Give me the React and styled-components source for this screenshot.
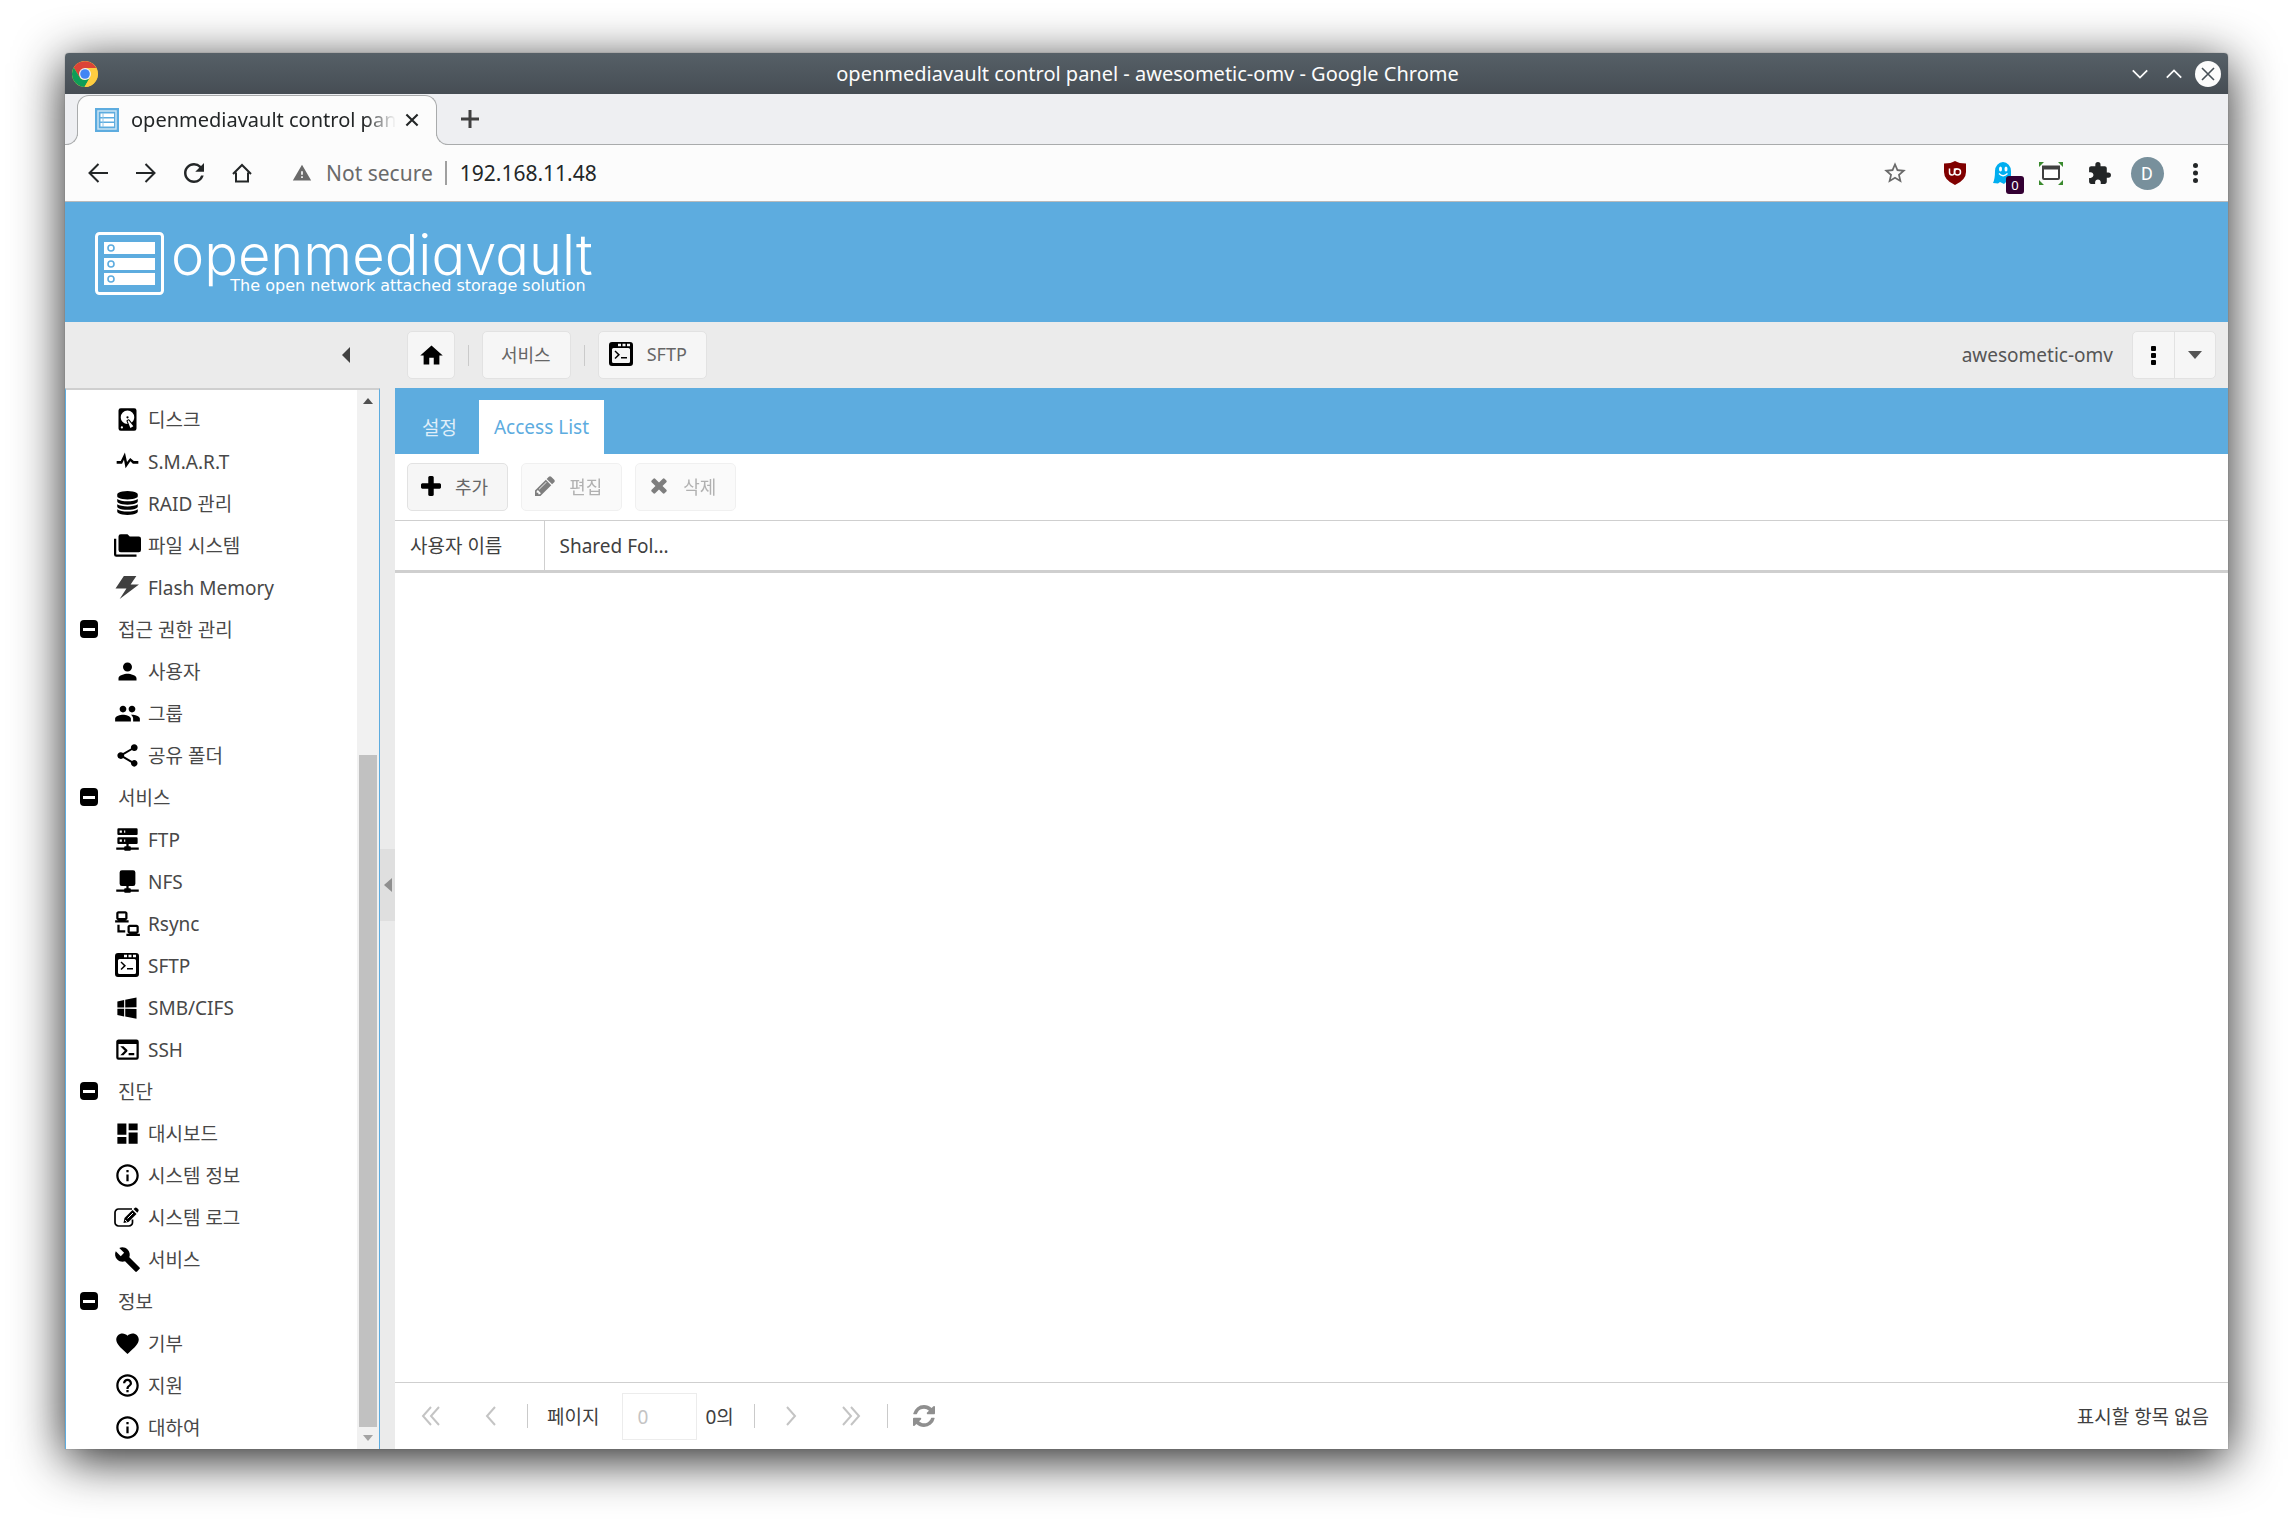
import React from "react"
import styled, { createGlobalStyle } from "styled-components"
import {
    MdBuild,
    MdDashboard,
    MdExtension,
    MdFavorite,
    MdGroup,
    MdHelpOutline,
    MdOutlineInfo,
    MdPerson,
    MdRefresh,
    MdShare,
    MdStarBorder,
    MdWarning,
} from "react-icons/md"

const GlobalStyle = createGlobalStyle`
    * {
        box-sizing: border-box;
    }

    body {
        margin: 0;
        background: #fff;
        font-family: "Noto Sans", "Noto Sans CJK KR", sans-serif;
        font-size: 20px;
        color: #404040;
    }

    button, input {
        font: inherit;
        color: inherit;
    }

    svg {
        display: block;
        flex: none;
    }
`

const Page = styled.div`
    display: flex;
    min-height: 100vh;
    padding: 53px 65px 77px;
`

const Window = styled.div`
    display: flex;
    flex-direction: column;
    flex: 1;
    min-width: 0;
    border-radius: 4px 4px 0 0;
    background: #fff;
    box-shadow: 0 0 1px #555, 0 10px 50px rgba(0, 0, 0, 0.88);
`

/* window frame */

const TitleBar = styled.header`
    display: grid;
    grid-template-columns: 100px 1fr 102px;
    align-items: center;
    height: 41px;
    padding: 0 3px 0 7px;
    border-radius: 4px 4px 0 0;
    background: linear-gradient(#566067, #464d54);
    color: #fcfcfc;
`

const WindowTitle = styled.span`
    font-size: 20px;
    line-height: 24px;
    text-align: center;
    white-space: nowrap;
`

const WindowButtons = styled.div`
    display: flex;
`

const IconButton = styled.button`
    display: flex;
    align-items: center;
    justify-content: center;
    flex: none;
    width: ${(props) => props.$width || 48}px;
    height: ${(props) => props.$height || 48}px;
    padding: 0;
    border: 0;
    background: none;
    color: ${(props) => props.$color || "inherit"};
`

const TabStrip = styled.div`
    display: flex;
    align-items: flex-end;
    height: 51px;
    padding-left: 12px;
    border-bottom: 1px solid #a9abac;
    background: #eeeff2;
`

const BrowserTab = styled.div`
    position: relative;
    display: flex;
    align-items: center;
    width: 360px;
    height: 50px;
    margin-bottom: -1px;
    padding: 0 8px 2px 17px;
    border: 1px solid #a9abac;
    border-bottom: 0;
    border-radius: 12px 12px 0 0;
    background: #fcfcfc;
    color: #232627;

    &::before,
    &::after {
        content: "";
        position: absolute;
        bottom: 0;
        width: 12px;
        height: 12px;
        border-bottom: 1px solid #a9abac;
        background: #eeeff2;
    }

    &::before {
        right: 100%;
        border-right: 1px solid #a9abac;
        border-bottom-right-radius: 12px;
        box-shadow: 4px 4px 0 #fcfcfc;
    }

    &::after {
        left: 100%;
        border-left: 1px solid #a9abac;
        border-bottom-left-radius: 12px;
        box-shadow: -4px 4px 0 #fcfcfc;
    }
`

const TabTitle = styled.span`
    flex: 1;
    margin-left: 12px;
    overflow: hidden;
    white-space: nowrap;
    mask-image: linear-gradient(to right, #000 88%, transparent);
`

const AddressBar = styled.div`
    display: flex;
    align-items: center;
    height: 57px;
    padding: 0 9px;
    border-bottom: 1px solid #b8babb;
    background: #fcfcfc;
    font-size: 21px;
    color: #232627;
`

const Security = styled.span`
    display: flex;
    align-items: center;
    gap: 14px;
    margin-left: 26px;
    padding-right: 12px;
    border-right: 2px solid #a0a0a0;
    line-height: 24px;
    color: #6a6a6a;
`

const Address = styled.input`
    flex: 1;
    min-width: 0;
    padding: 0 13px;
    border: 0;
    outline: 0;
    background: none;
`

const Star = styled.div`
    margin-right: 12px;
`

const Extension = styled.div`
    position: relative;
`

const Badge = styled.span`
    position: absolute;
    left: 27px;
    top: 27px;
    width: 18px;
    height: 18px;
    border-radius: 3px;
    background: #330033;
    font-size: 13px;
    line-height: 18px;
    text-align: center;
    color: #fff;
`

const Avatar = styled.span`
    width: 33px;
    height: 33px;
    border-radius: 50%;
    background: #78909c;
    font-family: Roboto, sans-serif;
    font-size: 18px;
    line-height: 33px;
    text-align: center;
    color: #fff;
`

/* control panel */

const Banner = styled.div`
    display: flex;
    align-items: center;
    gap: 7px;
    height: 120px;
    padding: 2px 30px 0;
    background: #5dacdf;
    color: #fff;
`

const Brand = styled.div`
    display: flex;
    flex-direction: column;
    align-items: flex-end;
`

const BrandName = styled.span`
    font-family: Inter, sans-serif;
    font-feature-settings: "cv11";
    font-size: 56px;
    font-weight: 300;
    line-height: 48px;
`

const Tagline = styled.span`
    padding-right: 7px;
    padding-bottom: 2px;
    font-family: "DejaVu Sans", sans-serif;
    font-size: 16px;
    line-height: 14px;
`

const NavBar = styled.div`
    display: flex;
    align-items: center;
    gap: 13px;
    height: 66px;
    padding-right: 12px;
    background: #ebebeb;
`

const CollapseCell = styled.div`
    display: flex;
    justify-content: flex-end;
    width: 329px;
    padding-right: 32px;
`

const Divider = styled.span`
    width: 1px;
    height: ${(props) => props.$height || 21}px;
    background: #cacaca;
`

const ToolButton = styled.button`
    display: flex;
    align-items: center;
    justify-content: center;
    gap: 14px;
    height: 48px;
    padding: 0 19px 2px ${(props) => props.$left || 18}px;
    border: 1px solid #e2e2e2;
    border-radius: 5px;
    background: #f6f6f6;
    font-size: 18px;
    color: #666;

    &:disabled {
        opacity: 0.5;
    }
`

const HomeButton = styled(ToolButton)`
    width: 48px;
    padding: 0;
`

const Host = styled.span`
    margin-left: auto;
    margin-right: 6px;
    padding-bottom: 1px;
    font-size: 19px;
    color: #555;
`

const SplitButton = styled.div`
    display: flex;
    height: 48px;
    border: 1px solid #e2e2e2;
    border-radius: 5px;
    background: #f6f6f6;

    & > :last-child {
        border-left: 1px solid #e2e2e2;
    }
`

const Body = styled.div`
    display: grid;
    grid-template-columns: 315px 15px 1fr;
    flex: 1;
    background: #ebebeb;
`

const Sidebar = styled.nav`
    display: flex;
    border: 1px solid #5dacdf;
    border-top: 2px solid #cfcfcf;
    border-bottom: 0;
    background: #fff;
`

const Tree = styled.ul`
    flex: 1;
    margin: 0;
    padding: 8px 0 0;
    list-style: none;
`

const Node = styled.li`
    display: flex;
    align-items: center;
    height: 42px;
    padding-left: ${(props) => (props.$group ? 14 : 48)}px;
    gap: ${(props) => (props.$group ? 20 : 7)}px;
    color: #000;
`

const NodeLink = styled.a`
    padding-top: 1px;
    font-size: 19px;
    line-height: 26px;
    color: #484848;
    text-decoration: none;
`

const Toggle = styled.button`
    display: flex;
    align-items: center;
    justify-content: center;
    width: 18px;
    height: 18px;
    padding: 0;
    border: 0;
    border-radius: 4px;
    background: #000;

    &::before {
        content: "";
        width: 12px;
        height: 3px;
        background: #fff;
    }
`

const Scrollbar = styled.div`
    display: flex;
    flex-direction: column;
    width: 22px;
    background: #f1f1f1;
`

const Track = styled.div`
    display: grid;
    grid-template-rows: 51fr 100fr;
    flex: 1;
    padding: 0 2px;
`

const Thumb = styled.div`
    grid-row: 2;
    background: #c1c1c1;
`

const Splitter = styled.div`
    display: flex;
    align-items: center;
    padding-bottom: 68px;
`

const SplitterHandle = styled(IconButton)`
    background: #dfdfdf;
`

const Main = styled.main`
    display: flex;
    flex-direction: column;
    min-width: 0;
    background: #fff;
`

const Tabs = styled.div`
    display: flex;
    align-items: flex-end;
    gap: 7px;
    height: 66px;
    padding-left: 12px;
    background: #5dacdf;
`

const Tab = styled.button`
    height: 54px;
    padding: 0 15px;
    border: 0;
    background: ${(props) => (props.$active ? "#fff" : "none")};
    font-size: 19px;
    color: ${(props) => (props.$active ? "#5dacdf" : "#dfeef9")};
`

const Toolbar = styled.div`
    display: flex;
    align-items: center;
    gap: 13px;
    height: 67px;
    padding-left: 12px;
    border-bottom: 1px solid #cfcfcf;
`

const Grid = styled.table`
    width: 100%;
    border-collapse: collapse;
    border-bottom: 3px solid #cfcfcf;
`

const Column = styled.th`
    width: ${(props) => props.$width || "auto"};
    height: 50px;
    padding: 1px 15px 0;
    border-right: ${(props) => (props.$last ? 0 : 1)}px solid #cfcfcf;
    font-size: 19px;
    font-weight: 400;
    line-height: 26px;
    text-align: left;
`

const Pager = styled.div`
    display: flex;
    align-items: center;
    gap: 12px;
    height: 67px;
    margin-top: auto;
    padding: 0 19px 0 12px;
    border-top: 1px solid #cfcfcf;
    font-size: 19px;
    color: #404040;
`

const PageLabel = styled.label`
    display: flex;
    align-items: center;
    gap: 23px;
    margin-left: 7px;
`

const PageInput = styled.input`
    width: 75px;
    height: 47px;
    padding: 2px 14px 0;
    border: 1px solid #ececec;
    background: #fff;
    color: #c4c4c4;
`

const PageCount = styled.span`
    margin-left: -4px;
    margin-right: 8px;
`

const Status = styled.span`
    margin-left: auto;
`

/* icons */

const Glyph = ({ d, box = "0 0 24 24", size = 27, width, ...rest }) => (
    <svg viewBox={box} width={width || size} height={size} fill="currentColor" aria-hidden="true" {...rest}>
        <path d={d} fillRule="evenodd" />
    </svg>
)

const Stroke = ({ d, size = 20, weight = 2 }) => (
    <svg viewBox="0 0 20 20" width={size} height={size} fill="none" stroke="currentColor" strokeWidth={weight} aria-hidden="true">
        <path d={d} />
    </svg>
)

const paths = {
    disk: "M6,2H18A2,2 0 0,1 20,4V20A2,2 0 0,1 18,22H6A2,2 0 0,1 4,20V4A2,2 0 0,1 6,2M12,4A6,6 0 0,0 6,10C6,13.31 8.69,16 12.1,16L11.22,13.77C10.95,13.29 11.11,12.68 11.59,12.4L12.45,11.9C12.93,11.63 13.54,11.79 13.82,12.27L15.74,14.69C17.12,13.59 18,11.9 18,10A6,6 0 0,0 12,4M12,9A1,1 0 0,1 13,10A1,1 0 0,1 12,11A1,1 0 0,1 11,10A1,1 0 0,1 12,9M7,18A1,1 0 0,0 6,19A1,1 0 0,0 7,20A1,1 0 0,0 8,19A1,1 0 0,0 7,18M12.09,13.27L14.58,19.58L17.17,18.08L12.95,12.77L12.09,13.27Z",
    pulse: "M2,12H5.79L9.6,4.2L11.58,12.95L14.5,9.16L17.83,12H22V14.5H17L14.67,12.17L10.2,18.73L8.74,10.9L7,14.5H2V12Z",
    database: "M768 768q237 0 443-43t325-127v170q0 69-103 128t-280 93.5-385 34.5-385-34.5-280-93.5-103-128v-170q119 84 325 127t443 43zm0 768q237 0 443-43t325-127v170q0 69-103 128t-280 93.5-385 34.5-385-34.5-280-93.5-103-128v-170q119 84 325 127t443 43zm0-384q237 0 443-43t325-127v170q0 69-103 128t-280 93.5-385 34.5-385-34.5-280-93.5-103-128v-170q119 84 325 127t443 43zm0-1152q208 0 385 34.5t280 93.5 103 128v128q0 69-103 128t-280 93.5-385 34.5-385-34.5-280-93.5-103-128v-128q0-69 103-128t280-93.5 385-34.5z",
    folders: "M22,4H14L12,2H6A2,2 0 0,0 4,4V16A2,2 0 0,0 6,18H22A2,2 0 0,0 24,16V6A2,2 0 0,0 22,4M2,6H0V11H0V20A2,2 0 0,0 2,22H20V20H2V6Z",
    bolt: "M8.500 1H20.500L15 9H23L4.500 23L11 13H.500Z",
    server: "M13,18H14A1,1 0 0,1 15,19H22V21H15A1,1 0 0,1 14,22H10A1,1 0 0,1 9,21H2V19H9A1,1 0 0,1 10,18H11V16H4A1,1 0 0,1 3,15V11A1,1 0 0,1 4,10H20A1,1 0 0,1 21,11V15A1,1 0 0,1 20,16H13V18M4,2H20A1,1 0 0,1 21,3V7A1,1 0 0,1 20,8H4A1,1 0 0,1 3,7V3A1,1 0 0,1 4,2M9,6H10V4H9V6M9,14H10V12H9V14M5,4V6H7V4H5M5,12V14H7V12H5Z",
    nfs: "M13,18H14A1,1 0 0,1 15,19H22V21H15A1,1 0 0,1 14,22H10A1,1 0 0,1 9,21H2V19H9A1,1 0 0,1 10,18H11V16H7A2,2 0 0,1 5,14V4A2,2 0 0,1 7,2H17A2,2 0 0,1 19,4V14A2,2 0 0,1 17,16H13V18Z",
    lan: "M4,1C2.89,1 2,1.89 2,3V7C2,8.11 2.89,9 4,9H1V11H13V9H10C11.11,9 12,8.11 12,7V3C12,1.89 11.11,1 10,1H4M4,3H10V7H4V3M3,13V18L3,20H10V18H5V13H3M14,13C12.89,13 12,13.89 12,15V19C12,20.11 12.89,21 14,21H11V23H23V21H20C21.11,21 22,20.11 22,19V15C22,13.89 21.11,13 20,13H14M14,15H20V19H14V15Z",
    sftp: "M3 0H21A3 3 0 0 1 24 3V21A3 3 0 0 1 21 24H3A3 3 0 0 1 0 21V3A3 3 0 0 1 3 0ZM4.500 6A1.500 1.500 0 0 0 3 7.500V19.500A1.500 1.500 0 0 0 4.500 21H19.500A1.500 1.500 0 0 0 21 19.500V7.500A1.500 1.500 0 0 0 19.500 6ZM9 1.700H12V4.300H9ZM13.500 1.700H16.500V4.300H13.500ZM18 1.700H21V4.300H18ZM6.500 8.500L11 12.700L6.500 17L5.500 16L8.800 12.700L5.500 9.500ZM12 15H18V16.500H12Z",
    windows: "M3,12V6.75L9,5.43V11.91L3,12M20,3V11.75L10,11.9V5.21L20,3M3,13L9,13.09V19.9L3,18.75V13M20,13.25V22L10,20.09V13.1L20,13.25Z",
    console: "M20,19V7H4V19H20M20,3A2,2 0 0,1 22,5V19A2,2 0 0,1 20,21H4A2,2 0 0,1 2,19V5C2,3.89 2.9,3 4,3H20M13,17V15H18V17H13M9.58,13L5.57,9H8.4L11.7,12.3C12.09,12.69 12.09,13.33 11.7,13.72L8.42,17H5.59L9.58,13Z",
    home: "M10,20V14H14V20H19V12H22L12,3L2,12H5V20H10Z",
    plus: "M1408 800v192q0 40-28 68t-68 28h-416v416q0 40-28 68t-68 28h-192q-40 0-68-28t-28-68v-416h-416q-40 0-68-28t-28-68v-192q0-40 28-68t68-28h416v-416q0-40 28-68t68-28h192q40 0 68 28t28 68v416h416q40 0 68 28t28 68z",
    pencil: "M363 1536l91-91-235-235-91 91v107h128v128h107zm523-928q0-22-22-22-10 0-17 7l-542 542q-7 7-7 17 0 22 22 22 10 0 17-7l542-542q7-7 7-17zm-54-192l416 416-832 832h-416v-416zm683 96q0 53-37 90l-166 166-416-416 166-165q36-38 90-38 53 0 91 38l235 234q37 39 37 91z",
    times: "M1298 1322q0 40-28 68l-136 136q-28 28-68 28t-68-28l-294-294-294 294q-28 28-68 28t-68-28l-136-136q-28-28-28-68t28-68l294-294-294-294q-28-28-28-68t28-68l136-136q28-28 68-28t68 28l294 294 294-294q28-28 68-28t68 28l136 136q28 28 28 68t-28 68l-294 294 294 294q28 28 28 68z",
    refresh: "M1511 1056q0 5-1 7-64 268-268 434.500t-478 166.500q-146 0-282.500-55t-243.500-157l-129 129q-19 19-45 19t-45-19-19-45v-448q0-26 19-45t45-19h448q26 0 45 19t19 45-19 45l-137 137q71 66 161 102t187 36q134 0 250-65t186-179q11-17 53-117 8-23 30-23h192q13 0 22.500 9.500t9.500 22.500zm25-800v448q0 26-19 45t-45 19h-448q-26 0-45-19t-19-45 19-45l138-138q-148-137-349-137-134 0-250 65t-186 179q-11 17-53 117-8 23-30 23h-199q-13 0-22.500-9.500t-9.500-22.500v-7q65-268 270-434.500t480-166.500q146 0 284 55.500t245 156.500l130-129q19-19 45-19t45 19 19 45z",
}

const ChromeLogo = () => (
    <svg viewBox="0 0 26 26" width="26" height="26" aria-hidden="true">
        <circle cx="13" cy="13" r="13" fill="#ffcd40" />
        <path d="M13 13L7.500 16.200L1.740 6.500A13 13 0 0 1 24.500 7.300L13 7Z" fill="#db4437" />
        <path d="M1.740 6.500A13 13 0 0 0 12.500 26L18 16.500L13 19A6 6 0 0 1 7.500 16Z" fill="#0f9d58" />
        <path d="M13 7H24.300A13 13 0 0 1 12.500 26L18.200 16Z" fill="#ffcd40" />
        <circle cx="13" cy="13" r="6" fill="#f1f1f1" />
        <circle cx="13" cy="13" r="4.800" fill="#4285f4" />
    </svg>
)

const Favicon = () => (
    <svg viewBox="0 0 24 24" width="24" height="24" aria-hidden="true">
        <path d="M0 0H24V24H0Z" fill="#5dacdf" />
        <path d="M3 3H21V21H3Z" fill="none" stroke="#c9e3f5" strokeWidth="1.500" />
        <path d="M5.500 5.500H19V9H5.500ZM5.500 10.500H19V13.500H5.500ZM5.500 15H19V18.500H5.500Z" fill="#fff" />
        <path d="M8 5V19" stroke="#8cc4e9" />
    </svg>
)

const VaultLogo = () => (
    <svg viewBox="0 0 69 63" width="69" height="63" fill="#fff" aria-hidden="true">
        <rect x="1.500" y="1.500" width="66" height="60" rx="3" fill="none" stroke="#fff" strokeWidth="3" />
        {[10, 26, 41].map((y) => (
            <g key={y}>
                <rect x="9" y={y} width="51" height="12" />
                <circle cx="16" cy={y + 6} r="3" fill="none" stroke="#5dacdf" strokeWidth="1.600" />
            </g>
        ))}
    </svg>
)

const Shield = () => (
    <svg viewBox="0 0 22 24" width="22" height="24" aria-hidden="true">
        <path d="M11 0Q15 2.500 22 2.500V11Q22 19 11 24Q0 19 0 11V2.500Q7 2.500 11 0Z" fill="#800000" />
        <path d="M5.500 7.500V11.500A2.500 2.500 0 0 0 10.500 11.500V7.500M10.500 8H13.500" fill="none" stroke="#fff" strokeWidth="1.500" />
        <circle cx="13.500" cy="11" r="3" fill="none" stroke="#fff" strokeWidth="1.500" />
    </svg>
)

const Ghost = () => (
    <svg viewBox="0 0 20 24" width="20" height="24" aria-hidden="true">
        <path d="M2 10A8 9 0 0 1 18 10V22L14 20L11 23L7 21L5 22.500L0 22Q2 18 2 10Z" fill="#00aef0" />
        <ellipse cx="7.500" cy="8" rx="1.500" ry="2.500" fill="#fff" />
        <ellipse cx="13" cy="8" rx="1.500" ry="2.500" fill="#fff" />
        <path d="M6 12.500Q10 17 14.500 12.500" fill="none" stroke="#fff" strokeWidth="1.300" />
    </svg>
)

const Capture = () => (
    <svg viewBox="0 0 24 24" width="24" height="24" aria-hidden="true">
        <path d="M0 1H5L0 6ZM24 1H19L24 6ZM0 24H5L0 19ZM24 24H19L24 19Z" fill="#3a8a2e" />
        <rect x="4" y="6" width="16" height="12" rx="1" fill="#fff" stroke="#404040" strokeWidth="2" />
        <path d="M3 6.500H21" stroke="#404040" strokeWidth="4" />
    </svg>
)

const EditIcon = () => (
    <svg viewBox="0 0 27 27" width="27" height="27" aria-hidden="true">
        <path d="M18 5H4.500A3.500 3.500 0 0 0 1 8.500V18.500A3.500 3.500 0 0 0 4.500 22H15A3.500 3.500 0 0 0 18.500 18.500V15.500" fill="none" stroke="#000" strokeWidth="1.700" />
        <path d="M9.500 19L10.500 14L18.500 6L22.500 10L14.500 18Z" />
        <path d="M19.500 5L21 3.800Q22 3.200 23 4L24.500 5.500Q25 6.500 24.300 7.300L23.300 8.700Z" />
        <path d="M13.500 14.500L19 9" stroke="#fff" strokeWidth="1" />
        <path d="M11 16L13 17.800" stroke="#fff" strokeWidth="1" />
    </svg>
)

const Triangle = ({ d, width, height }) => <Glyph d={d} box={`0 0 ${width} ${height}`} width={width} size={height} />

const menu = [
    { icon: <Glyph d={paths.disk} />, label: "디스크" },
    { icon: <Glyph d={paths.pulse} size={26} width={27} />, label: "S.M.A.R.T" },
    { icon: <Glyph d={paths.database} box="0 0 1536 1792" size={24} width={27} />, label: "RAID 관리" },
    { icon: <Glyph d={paths.folders} />, label: "파일 시스템" },
    { icon: <Glyph d={paths.bolt} size={25} width={27} color="#404040" />, label: "Flash Memory" },
    { group: true, label: "접근 권한 관리" },
    { icon: <MdPerson size={27} />, label: "사용자" },
    { icon: <MdGroup size={27} />, label: "그룹" },
    { icon: <MdShare size={27} />, label: "공유 폴더" },
    { group: true, label: "서비스" },
    { icon: <Glyph d={paths.server} />, label: "FTP" },
    { icon: <Glyph d={paths.nfs} />, label: "NFS" },
    { icon: <Glyph d={paths.lan} />, label: "Rsync" },
    { icon: <Glyph d={paths.sftp} box="-1 -1 27 27" />, label: "SFTP" },
    { icon: <Glyph d={paths.windows} />, label: "SMB/CIFS" },
    { icon: <Glyph d={paths.console} />, label: "SSH" },
    { group: true, label: "진단" },
    { icon: <MdDashboard size={27} />, label: "대시보드" },
    { icon: <MdOutlineInfo size={27} />, label: "시스템 정보" },
    { icon: <EditIcon />, label: "시스템 로그" },
    { icon: <MdBuild size={27} />, label: "서비스" },
    { group: true, label: "정보" },
    { icon: <MdFavorite size={27} />, label: "기부" },
    { icon: <MdHelpOutline size={27} />, label: "지원" },
    { icon: <MdOutlineInfo size={27} />, label: "대하여" },
]

const BrowserChrome = () => (
    <>
        <TitleBar>
            <ChromeLogo />
            <WindowTitle>openmediavault control panel - awesometic-omv - Google Chrome</WindowTitle>
            <WindowButtons>
                <IconButton $width={34} $height={40} aria-label="Minimize">
                    <Stroke d="M2 6L10 14L18 6" size={18} />
                </IconButton>
                <IconButton $width={34} $height={40} aria-label="Maximize">
                    <Stroke d="M2 14L10 6L18 14" size={18} />
                </IconButton>
                <IconButton $width={34} $height={40} aria-label="Close window">
                    <svg viewBox="0 0 26 26" width="26" height="26" aria-hidden="true">
                        <circle cx="13" cy="13" r="13" fill="#fcfcfc" />
                        <path d="M7 7L19 19M19 7L7 19" stroke="#475057" strokeWidth="1.600" />
                    </svg>
                </IconButton>
            </WindowButtons>
        </TitleBar>
        <TabStrip>
            <BrowserTab>
                <Favicon />
                <TabTitle>openmediavault control panel</TabTitle>
                <IconButton $width={32} $height={32} aria-label="Close tab">
                    <Stroke d="M2 2L18 18M18 2L2 18" size={14} weight={3} />
                </IconButton>
            </BrowserTab>
            <IconButton $width={66} $height={50} aria-label="New tab">
                <Stroke d="M10 1V19M1 10H19" weight={3} />
            </IconButton>
        </TabStrip>
        <AddressBar>
            <IconButton aria-label="Back">
                <Stroke d="M10.500 1L1.500 10L10.500 19M1.500 10H20" />
            </IconButton>
            <IconButton aria-label="Forward">
                <Stroke d="M9.500 1L18.500 10L9.500 19M18.500 10H0" />
            </IconButton>
            <IconButton aria-label="Reload">
                <MdRefresh size={30} />
            </IconButton>
            <IconButton aria-label="Home">
                <Stroke d="M1 11L10 2L19 11M4 9.500V18.500H16V9.500" />
            </IconButton>
            <Security>
                <MdWarning size={20} />
                Not secure
            </Security>
            <Address defaultValue="192.168.11.48" aria-label="Address" />
            <Star>
                <IconButton $color="#6a6a6a" aria-label="Bookmark">
                    <MdStarBorder size={26} />
                </IconButton>
            </Star>
            <IconButton aria-label="uBlock">
                <Shield />
            </IconButton>
            <Extension>
                <IconButton aria-label="Ghostery">
                    <Ghost />
                </IconButton>
                <Badge>0</Badge>
            </Extension>
            <IconButton aria-label="Screen capture">
                <Capture />
            </IconButton>
            <IconButton aria-label="Extensions">
                <MdExtension size={25} />
            </IconButton>
            <IconButton aria-label="Profile">
                <Avatar>D</Avatar>
            </IconButton>
            <IconButton aria-label="Menu">
                <Glyph d="M0 2.500A2.500 2.500 0 1 1 5 2.500A2.500 2.500 0 1 1 0 2.500ZM0 10A2.500 2.500 0 1 1 5 10A2.500 2.500 0 1 1 0 10ZM0 17.500A2.500 2.500 0 1 1 5 17.500A2.500 2.500 0 1 1 0 17.500Z" box="0 0 5 20" width={5} size={20} />
            </IconButton>
        </AddressBar>
    </>
)

const Breadcrumb = () => (
    <NavBar>
        <CollapseCell>
            <IconButton $width={32} $height={32} aria-label="Collapse menu">
                <Triangle d="M8 0V16L0 8Z" width={8} height={16} />
            </IconButton>
        </CollapseCell>
        <HomeButton aria-label="Home">
            <Glyph d={paths.home} color="#000" />
        </HomeButton>
        <Divider />
        <ToolButton>서비스</ToolButton>
        <Divider />
        <ToolButton $left={10}>
            <Glyph d={paths.sftp} size={24} color="#000" />
            SFTP
        </ToolButton>
        <Host>awesometic-omv</Host>
        <SplitButton>
            <IconButton $width={41} $height={46} $color="#000" aria-label="Actions">
                <Glyph d="M0 1Q0 0 1 0H4Q5 0 5 1V4Q5 5 4 5H1Q0 5 0 4ZM0 8Q0 7 1 7H4Q5 7 5 8V11Q5 12 4 12H1Q0 12 0 11ZM0 15Q0 14 1 14H4Q5 14 5 15V18Q5 19 4 19H1Q0 19 0 18Z" box="0 0 5 19" width={5} size={19} />
            </IconButton>
            <IconButton $width={41} $height={46} $color="#555" aria-label="More">
                <Triangle d="M0 0H14L7 8Z" width={14} height={8} />
            </IconButton>
        </SplitButton>
    </NavBar>
)

const SideMenu = () => (
    <Sidebar>
        <Tree>
            {menu.map((item, index) => (
                <Node key={index} $group={item.group}>
                    {item.group ? <Toggle aria-label="Collapse" /> : item.icon}
                    <NodeLink href="#">{item.label}</NodeLink>
                </Node>
            ))}
        </Tree>
        <Scrollbar>
            <IconButton $width={22} $height={22} $color="#505050" aria-label="Scroll up">
                <Triangle d="M0 6L5 0L10 6Z" width={10} height={6} />
            </IconButton>
            <Track>
                <Thumb />
            </Track>
            <IconButton $width={22} $height={22} $color="#a3a3a3" aria-label="Scroll down">
                <Triangle d="M0 0H10L5 6Z" width={10} height={6} />
            </IconButton>
        </Scrollbar>
    </Sidebar>
)

const AccessList = () => (
    <Main>
        <Tabs>
            <Tab>설정</Tab>
            <Tab $active>Access List</Tab>
        </Tabs>
        <Toolbar>
            <ToolButton $left={13}>
                <Glyph d={paths.plus} box="0 192 1408 1408" size={20} color="#000" />
                추가
            </ToolButton>
            <ToolButton $left={13} disabled>
                <Glyph d={paths.pencil} box="0 128 1536 1536" size={20} color="#000" />
                편집
            </ToolButton>
            <ToolButton $left={13} disabled>
                <Glyph d={paths.times} box="-64 192 1536 1536" size={20} color="#000" />
                삭제
            </ToolButton>
        </Toolbar>
        <Grid>
            <thead>
                <tr>
                    <Column $width="149px">사용자 이름</Column>
                    <Column $last>Shared Fol...</Column>
                </tr>
            </thead>
        </Grid>
        <Pager>
            <IconButton $color="#c4c4c4" aria-label="First page">
                <Stroke d="M10 1L2 10L10 19M18 1L10 10L18 19" />
            </IconButton>
            <IconButton $color="#c4c4c4" aria-label="Previous page">
                <Stroke d="M14 1L6 10L14 19" />
            </IconButton>
            <Divider $height={24} />
            <PageLabel>
                페이지
                <PageInput defaultValue="0" disabled />
            </PageLabel>
            <PageCount>0의</PageCount>
            <Divider $height={24} />
            <IconButton $color="#c4c4c4" aria-label="Next page">
                <Stroke d="M6 1L14 10L6 19" />
            </IconButton>
            <IconButton $color="#c4c4c4" aria-label="Last page">
                <Stroke d="M2 1L10 10L2 19M10 1L18 10L10 19" />
            </IconButton>
            <Divider $height={24} />
            <IconButton $color="#8f8f8f" aria-label="Refresh">
                <Glyph d={paths.refresh} box="0 128 1536 1536" size={22} />
            </IconButton>
            <Status>표시할 항목 없음</Status>
        </Pager>
    </Main>
)

const App = () => (
    <>
        <GlobalStyle />
        <Page>
            <Window>
                <BrowserChrome />
                <Banner>
                    <VaultLogo />
                    <Brand>
                        <BrandName>openmediavault</BrandName>
                        <Tagline>The open network attached storage solution</Tagline>
                    </Brand>
                </Banner>
                <Breadcrumb />
                <Body>
                    <SideMenu />
                    <Splitter>
                        <SplitterHandle $width={15} $height={72} $color="#8f8f8f" aria-label="Collapse sidebar">
                            <Triangle d="M8 0V14L0 7Z" width={8} height={14} />
                        </SplitterHandle>
                    </Splitter>
                    <AccessList />
                </Body>
            </Window>
        </Page>
    </>
)

export default App
